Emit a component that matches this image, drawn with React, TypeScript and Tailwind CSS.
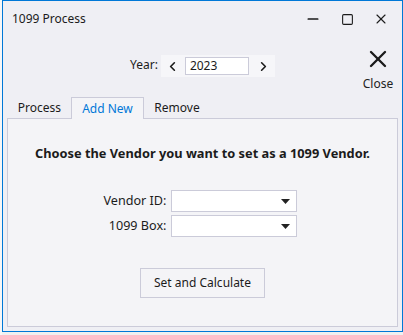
import { ChevronLeft, ChevronRight, X, Minus, Square } from 'lucide-react';

const font = { fontFamily: '"Noto Sans", "Open Sans", sans-serif' };

const Combo: React.FC = () => (
  <div className="w-[126px] h-[22px] bg-white border border-[#cbcbd9] flex items-center justify-end pr-[6px]">
    <svg width="9" height="5" viewBox="0 0 9 5"><path d="M0 0h9L4.5 5z" fill="#222" /></svg>
  </div>
);

export default function App() {
  return (
    <div className="w-[403px] h-[335px] bg-[#f0f0f0] flex" style={font}>
      <div className="w-[2px] bg-[#f7f7f7]" />
      <div className="w-[401px] h-[332px] border border-[#0078d7] bg-[#efeff4] flex flex-col text-[#1b1b1b]">
        {/* title bar */}
        <div className="h-[36px] flex items-center pl-[9px] shrink-0">
          <span className="text-[12px] flex-1">1099 Process</span>
          <div className="flex items-center">
            <div className="w-[34px] flex justify-center"><Minus size={16} strokeWidth={2.6} /></div>
            <div className="w-[34px] flex justify-center"><Square size={13} strokeWidth={2} /></div>
            <div className="w-[34px] flex justify-center mr-[4px]"><X size={16} strokeWidth={1.6} /></div>
          </div>
        </div>
        {/* toolbar */}
        <div className="h-[60px] flex shrink-0">
          <div className="flex-1 flex items-start pt-[18px] pl-[127px]">
            <span className="text-[12px] mt-[1px] mr-[3px]">Year:</span>
            <div className="flex items-center h-[22px] bg-[#f6f6f9] px-[4px]">
              <ChevronLeft size={15} strokeWidth={2.6} />
              <div className="ml-[5px] w-[64px] h-[18px] bg-white border border-[#cbcbd9] text-[12px] leading-[16px] pl-[4px]">2023</div>
              <div className="ml-[7px]"><ChevronRight size={15} strokeWidth={2.6} /></div>
            </div>
          </div>
          <div className="w-[42px] mr-[3px] flex flex-col items-center pt-[8px]">
            <X size={28} strokeWidth={2} />
            <span className="text-[12px] mt-[2px] text-[#222]">Close</span>
          </div>
        </div>
        {/* tabs */}
        <div className="flex items-end h-[21px] pl-[5px] text-[12px] shrink-0">
          <div className="w-[63px] h-[20px] flex items-center justify-center">Process</div>
          <div className="w-[73px] h-[22px] bg-[#f4f4f7] border border-b-0 border-[#cbcbd9] text-[#0078d7] flex items-center justify-center -mb-[1px] relative z-10">Add New</div>
          <div className="w-[66px] h-[20px] flex items-center justify-center">Remove</div>
        </div>
        <div className="mx-[4px] mb-[4px] flex-1 bg-[#f4f4f7] border border-[#cbcbd9] flex flex-col items-center">
          <div className="mt-[25px] text-[12.8px] font-bold">Choose the Vendor you want to set as a 1099 Vendor.</div>
          <div className="mt-[27px] mr-[4px] grid grid-cols-[auto_auto] gap-x-[5px] gap-y-[3px] items-center text-[12.6px]">
            <span className="text-right">Vendor ID:</span>
            <Combo />
            <span className="text-right">1099 Box:</span>
            <Combo />
          </div>
          <button className="mt-[31px] w-[125px] h-[30px] border border-[#cbcbd9] bg-[#f4f4f7] text-[12px]">Set and Calculate</button>
        </div>
      </div>
    </div>
  );
}
